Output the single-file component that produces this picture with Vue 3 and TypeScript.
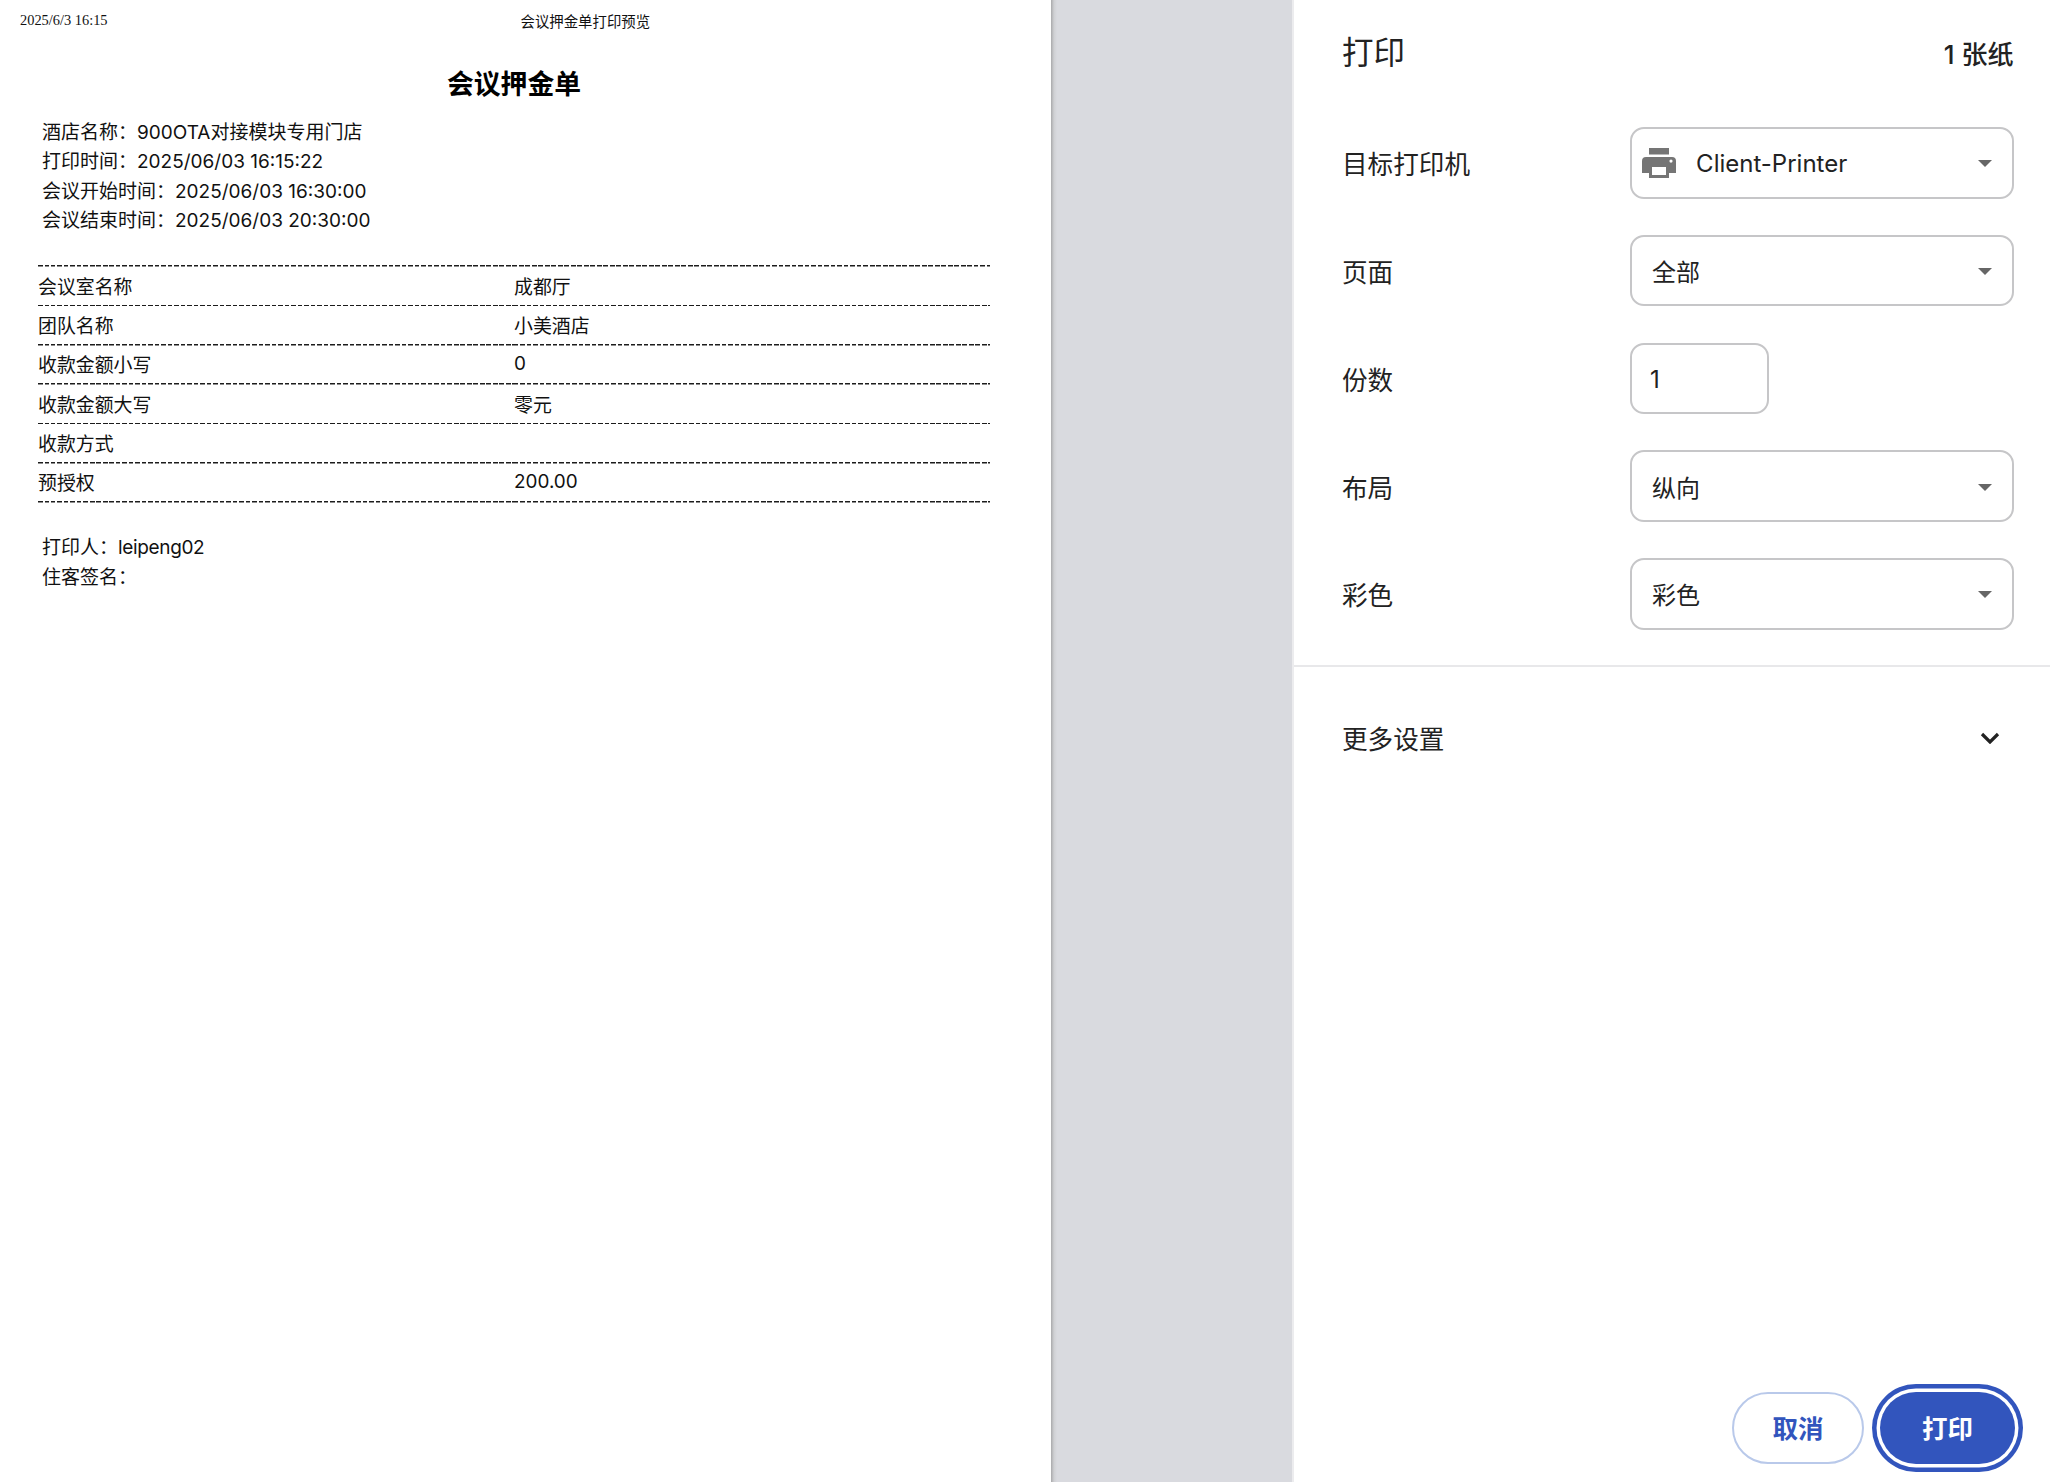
<script setup lang="ts">
const infoTop = ['酒店名称：900OTA对接模块专用门店', '打印时间：2025/06/03 16:15:22', '会议开始时间：2025/06/03 16:30:00', '会议结束时间：2025/06/03 20:30:00']
const rows: [string, string][] = [
  ['会议室名称', '成都厅'],
  ['团队名称', '小美酒店'],
  ['收款金额小写', '0'],
  ['收款金额大写', '零元'],
  ['收款方式', ''],
  ['预授权', '200.00'],
]
</script>

<template>
  <div class="page">
    <section class="paper">
      <header class="print-head">
        <span class="date">2025/6/3 16:15</span>
        <span class="doc-title">会议押金单打印预览</span>
      </header>
      <div class="sheet">
        <h1 class="sheet-title">会议押金单</h1>
        <div class="info">
          <div v-for="line in infoTop" :key="line">{{ line }}</div>
        </div>
        <div class="sheet-table">
          <div v-for="row in rows" :key="row[0]" class="sheet-row">
            <div class="cell">{{ row[0] }}</div>
            <div class="cell">{{ row[1] }}</div>
          </div>
        </div>
        <div class="info info-bottom">
          <div>打印人：<span class="tight">leipeng02</span></div>
          <div>住客签名：</div>
        </div>
      </div>
    </section>

    <div class="gutter"></div>

    <aside class="panel">
      <div class="panel-head">
        <h2 class="panel-title">打印</h2>
        <span class="sheets">1 张纸</span>
      </div>

      <div class="form">
        <div class="row">
          <label class="label">目标打印机</label>
          <div class="select printer">
            <svg class="printer-icon" viewBox="0 0 35 30" aria-hidden="true">
              <path d="M7 0h20v6.5H7z" />
              <path fill-rule="evenodd" d="M4 9h26a4 4 0 0 1 4 4v12h-7v5H7v-5H0V13a4 4 0 0 1 4-4zM10 19v8h14v-8zM29 11.5a1.6 1.6 0 1 0 0 3.2 1.6 1.6 0 0 0 0-3.2z" />
            </svg>
            <span class="value latin">Client-Printer</span>
            <span class="caret"></span>
          </div>
        </div>
        <div class="row">
          <label class="label">页面</label>
          <div class="select"><span class="value">全部</span><span class="caret"></span></div>
        </div>
        <div class="row">
          <label class="label">份数</label>
          <div class="select copies"><span class="value latin">1</span></div>
        </div>
        <div class="row">
          <label class="label">布局</label>
          <div class="select"><span class="value">纵向</span><span class="caret"></span></div>
        </div>
        <div class="row">
          <label class="label">彩色</label>
          <div class="select"><span class="value">彩色</span><span class="caret"></span></div>
        </div>
      </div>

      <div class="more">
        <span class="label">更多设置</span>
        <svg class="chevron" viewBox="0 0 20 12" aria-hidden="true">
          <path d="M2 2l8 8 8-8" />
        </svg>
      </div>

      <div class="actions">
        <button class="btn cancel" type="button">取消</button>
        <button class="btn primary" type="button">打印</button>
      </div>
    </aside>
  </div>
</template>

<style>
html, body { margin: 0; background: #fff; }
</style>

<style scoped>
.page {
  display: flex;
  width: 2050px;
  height: 1482px;
  overflow: hidden;
  background: #fff;
  color: #222;
  font-family: Inter, "Noto Sans CJK SC", sans-serif;
}
.paper {
  width: 1051px;
  flex: none;
  background: #fff;
  color: #111;
}
.print-head {
  display: flex;
  gap: 413px;
  padding: 10px 0 0 20px;
  height: 53px;
  box-sizing: border-box;
  font: 14.4px/20px "Liberation Serif", "Noto Sans CJK SC", serif;
}
.doc-title { position: relative; top: 2px; }
.sheet { width: 952px; margin-left: 38px; }
.sheet-title {
  margin: 0;
  height: 64.5px;
  font-size: 26.8px;
  line-height: 62px;
  font-weight: 700;
  text-align: center;
  color: #000;
}
.info {
  padding-left: 4px;
  font-size: 19px;
  line-height: 29.6px;
}
.tight { letter-spacing: -0.35px; }
.sheet-table {
  margin-top: 29.5px;
  padding-top: 1.5px;
  background: repeating-linear-gradient(90deg, #1c1c1c 0 4.5px, transparent 4.5px 6.5px) top / 100% 1.5px no-repeat;
  font-size: 18.9px;
}
.sheet-row {
  display: grid;
  grid-template-columns: 1fr 1fr;
  height: 39.33px;
}
.cell {
  display: flex;
  align-items: center;
  box-sizing: border-box;
  padding-bottom: 3px;
  background: repeating-linear-gradient(90deg, #1c1c1c 0 4.5px, transparent 4.5px 6.5px) bottom / 100% 1.5px no-repeat;
}
.info-bottom { margin-top: 30.5px; }
.gutter {
  flex: 1;
  background: linear-gradient(90deg, #a9a9ab 0, #cfd0d3 3px, #d9dadf 6px);
}
.panel {
  width: 758px;
  flex: none;
  box-sizing: border-box;
  border-left: 2px solid #ececee;
  background: #fff;
  display: flex;
  flex-direction: column;
}
.panel-head {
  display: flex;
  justify-content: space-between;
  align-items: center;
  height: 127px;
  box-sizing: border-box;
  padding: 0 36.5px 22px 48px;
}
.panel-title {
  margin: 0 0 5px;
  font-size: 31.5px;
  font-weight: 400;
  color: #222;
}
.sheets { font-size: 26px; font-weight: 500; color: #222; }
.form {
  display: flex;
  flex-direction: column;
  gap: 36.3px;
  padding: 0 36.5px 35.5px 48px;
  border-bottom: 2px solid #e8e8ea;
}
.row { display: flex; align-items: center; height: 71.5px; }
.label { width: 288px; flex: none; font-size: 25.6px; color: #222; }
.select {
  flex: 1;
  height: 71.5px;
  box-sizing: border-box;
  border: 2.5px solid #c6c6c8;
  border-radius: 14px;
  display: flex;
  align-items: center;
  padding: 0 20px;
  font-size: 24px;
  color: #222;
}
.latin { position: relative; top: 1px; }
.select.copies { flex: none; width: 139px; padding-left: 18px; }
.select.printer { padding-left: 9.5px; }
.printer-icon { width: 35px; height: 30px; fill: #757575; margin-right: 19.6px; flex: none; }
.caret {
  margin-left: auto;
  width: 0;
  height: 0;
  border-left: 7px solid transparent;
  border-right: 7px solid transparent;
  border-top: 7px solid #666;
  position: relative;
  top: 1px;
}
.more {
  display: flex;
  align-items: center;
  justify-content: space-between;
  height: 140px;
  box-sizing: border-box;
  padding: 0 50px 0 48px;
}
.chevron { width: 20px; height: 12px; fill: none; stroke: #222; stroke-width: 3.2; position: relative; top: 1px; }
.actions {
  margin-top: auto;
  display: flex;
  justify-content: flex-end;
  gap: 16px;
  padding: 0 35px 18px 0;
}
.btn {
  height: 72px;
  padding: 0 0 3px;
  box-sizing: border-box;
  border-radius: 36px;
  font: 700 25.5px "Noto Sans CJK SC", sans-serif;
  cursor: pointer;
}
.cancel {
  width: 132px;
  background: #fff;
  border: 2.5px solid #b9c9ea;
  color: #3255bd;
}
.primary {
  width: 135px;
  background: #3255bd;
  border: 0;
  color: #fff;
  box-shadow: 0 0 0 3.5px #fff, 0 0 0 8px #3255bd;
}
</style>
